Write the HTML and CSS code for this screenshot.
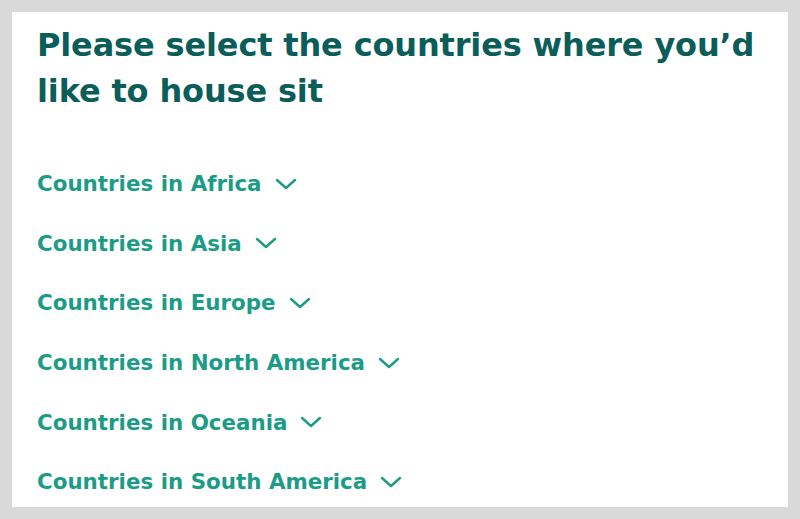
FILE: index.html
```html
<!DOCTYPE html>
<html lang="en">
<head>
  <meta charset="UTF-8">
  <meta name="viewport" content="width=device-width, initial-scale=1.0">
  <title>Countries</title>
  <link rel="stylesheet" href="styles.css">
</head>
<body>
  <div class="panel">
    <h1>Please select the countries where you’d like to house sit</h1>

    <ul class="regions">
      <li><button class="region">Countries in Africa <svg class="chev" viewBox="0 0 22 12"><path d="M2 2l9 8 9-8"/></svg></button></li>
      <li><button class="region">Countries in Asia <svg class="chev" viewBox="0 0 22 12"><path d="M2 2l9 8 9-8"/></svg></button></li>
      <li><button class="region">Countries in Europe <svg class="chev" viewBox="0 0 22 12"><path d="M2 2l9 8 9-8"/></svg></button></li>
      <li><button class="region">Countries in North America <svg class="chev" viewBox="0 0 22 12"><path d="M2 2l9 8 9-8"/></svg></button></li>
      <li><button class="region">Countries in Oceania <svg class="chev" viewBox="0 0 22 12"><path d="M2 2l9 8 9-8"/></svg></button></li>
      <li><button class="region">Countries in South America <svg class="chev" viewBox="0 0 22 12"><path d="M2 2l9 8 9-8"/></svg></button></li>
    </ul>
  </div>
</body>
</html>
```

FILE: styles.css
```css
body {
  margin: 0;
  padding: 12px;
  background-color: #d9d9d9;
  font-family: "DejaVu Sans", sans-serif;
}

.panel {
  background-color: white;
  height: 495px;
  box-sizing: border-box;
  padding: 10px 25px 0;
  overflow: hidden;
}

h1 {
  margin: 0;
  font-size: 32px;
  line-height: 46px;
  font-weight: 600;
  letter-spacing: -0.15px;
  color: #0b5d5a;
}

.regions {
  list-style: none;
  margin: 40px 0 0;
  padding: 0;
}

.region {
  display: flex;
  align-items: center;
  gap: 13px;
  height: 59.6px;
  padding: 0;
  border: none;
  background: none;
  font-family: inherit;
  font-size: 21.4px;
  font-weight: 600;
  color: #1c9c86;
  cursor: pointer;
}

.chev {
  width: 22px;
  height: 12px;
  fill: none;
  stroke: #1c9c86;
  stroke-width: 2.4;
  stroke-linecap: round;
  stroke-linejoin: round;
}
```
